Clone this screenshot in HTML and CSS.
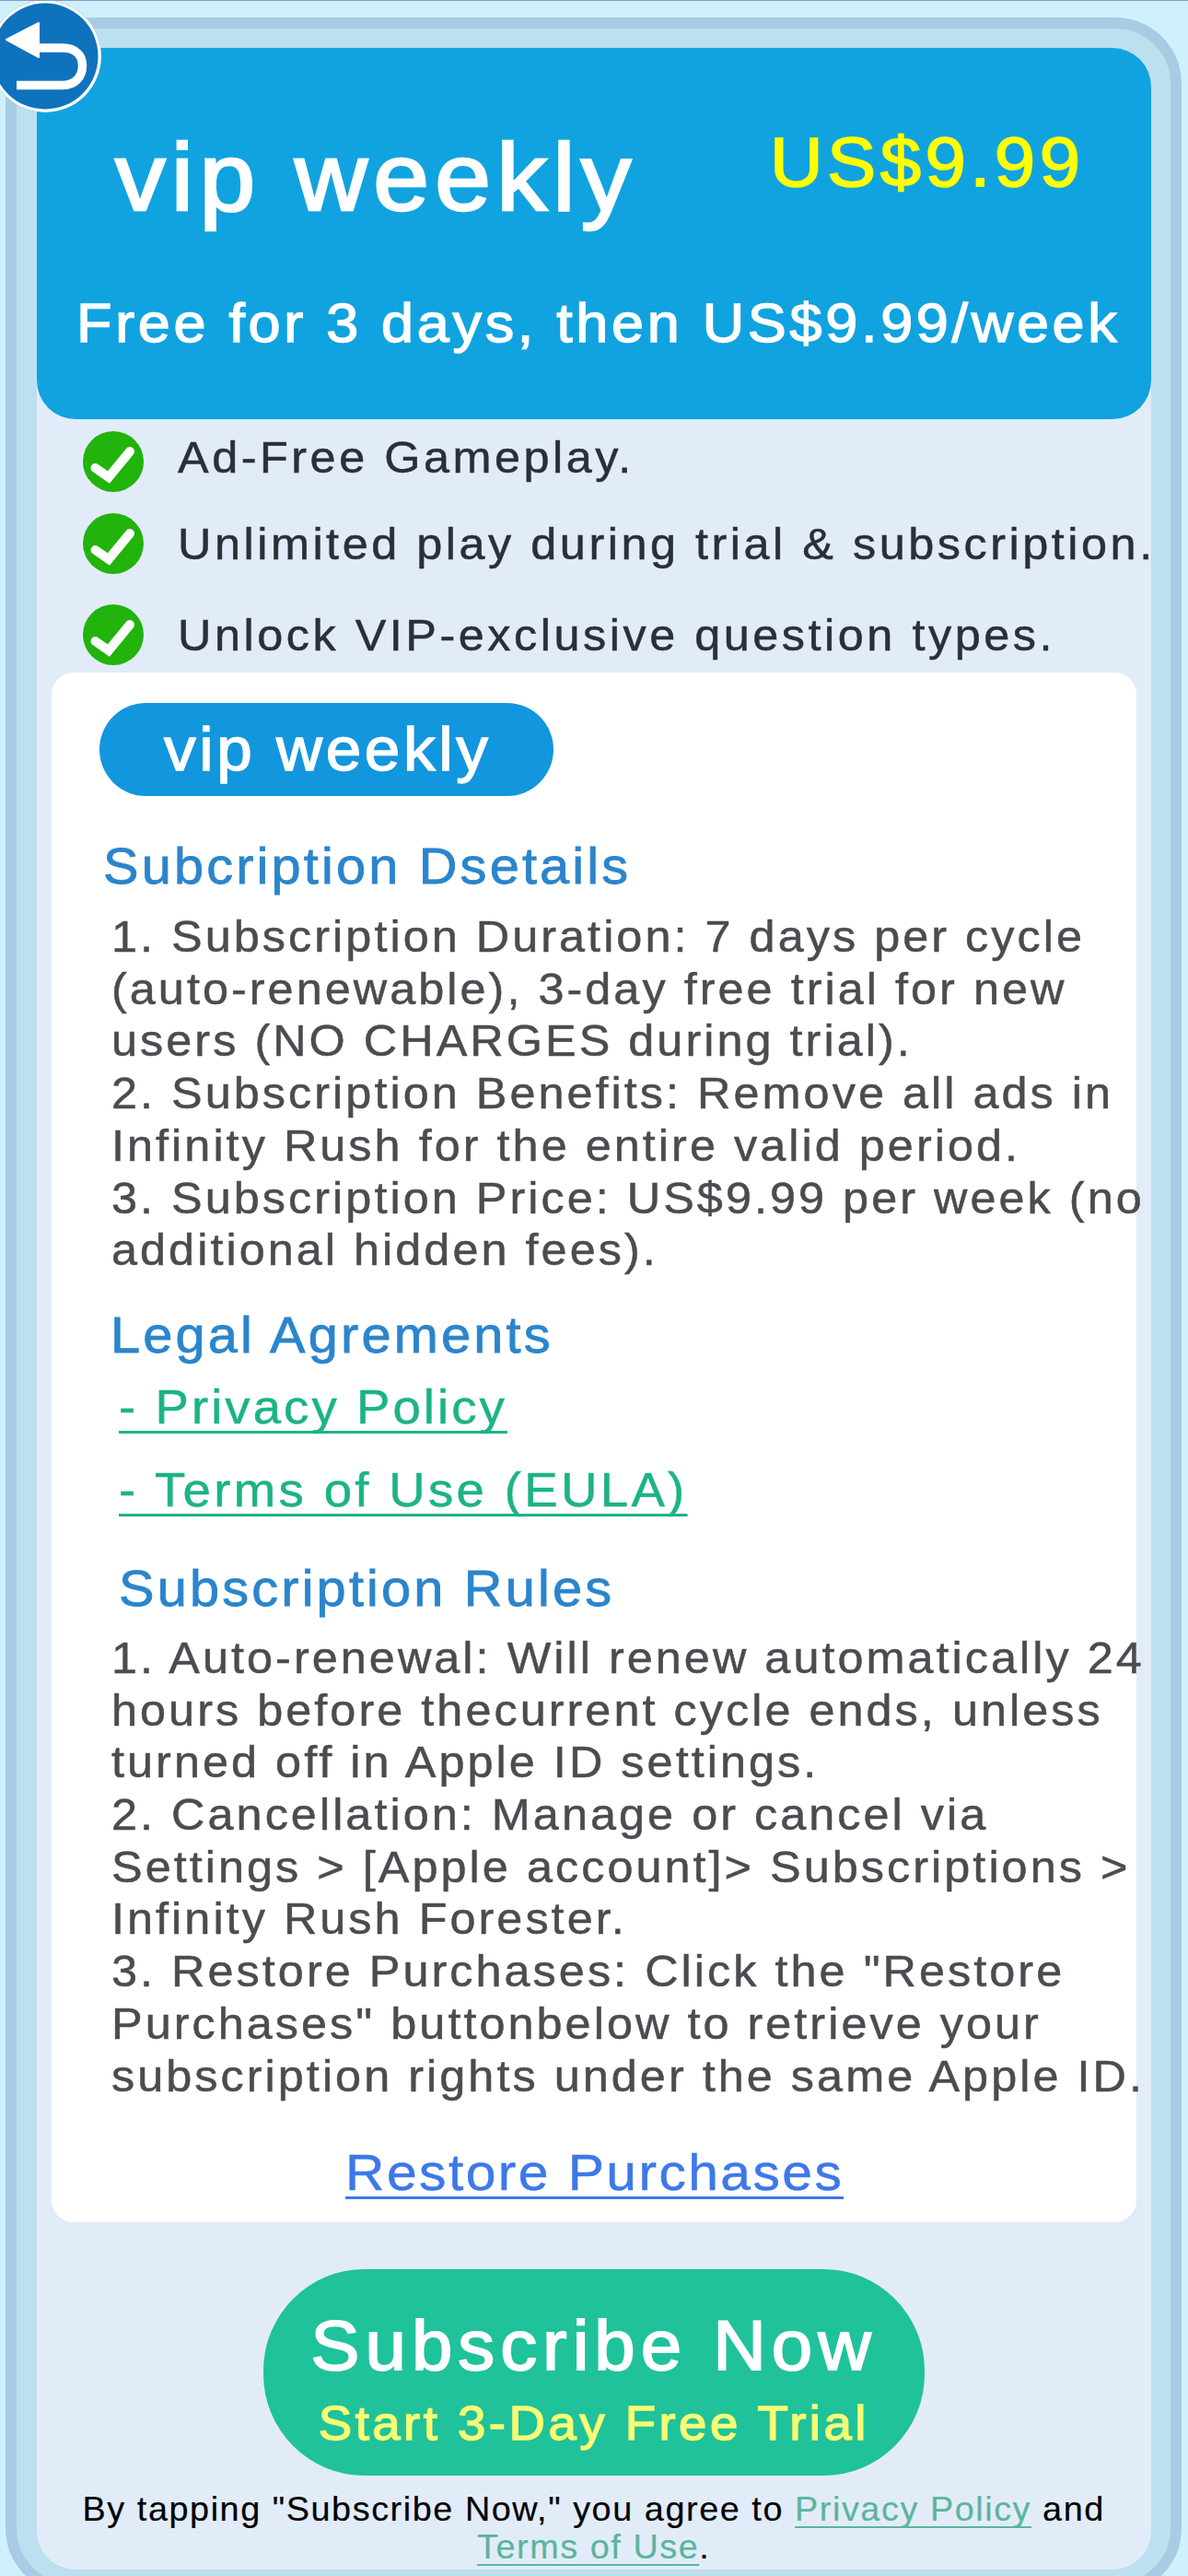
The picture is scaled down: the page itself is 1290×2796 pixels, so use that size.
FILE: index.html
```html
<!DOCTYPE html>
<html lang="en">
<head>
<meta charset="utf-8">
<title>vip weekly</title>
<link rel="stylesheet" href="styles.css">
</head>
<body>
<button class="back" aria-label="Back">
  <svg viewBox="-12 0 122 122" width="122" height="122"><path class="back-arrow" d="M7 43 L42 25 L42 62 Z"/><path class="back-line" d="M40 52 H68 C83 52 89.500 61 89.500 71 C89.500 84 81 92.500 68 92.500 H18"/></svg>
</button>
<main class="frame">
  <div class="inner">
    <header class="hero">
      <div class="hero-top">
        <h1 class="hero-title wide">vip weekly</h1>
        <div class="hero-price wide">US$9.99</div>
      </div>
      <p class="hero-sub wide">Free for 3 days, then US$9.99/week</p>
    </header>
    <ul class="features">
      <li class="feature f1"><svg class="check" viewBox="0 0 66 66"><circle cx="33" cy="33" r="33"/><path d="M13.500 40 L28 50 L51 22"/></svg><span class="wide">Ad-Free Gameplay.</span></li>
      <li class="feature f2"><svg class="check" viewBox="0 0 66 66"><circle cx="33" cy="33" r="33"/><path d="M13.500 40 L28 50 L51 22"/></svg><span class="wide">Unlimited play during trial &amp; subscription.</span></li>
      <li class="feature f3"><svg class="check" viewBox="0 0 66 66"><circle cx="33" cy="33" r="33"/><path d="M13.500 40 L28 50 L51 22"/></svg><span class="wide">Unlock VIP-exclusive question types.</span></li>
    </ul>
    <section class="card">
      <div class="pill"><span class="pill-label wide">vip weekly</span></div>
      <h2 class="heading h-details wide">Subcription Dsetails</h2>
      <p class="body-text first-body wide">1. Subscription Duration: 7 days per cycle<br>(auto-renewable), 3-day free trial for new<br>users (NO CHARGES during trial).<br>2. Subscription Benefits: Remove all ads in<br>Infinity Rush for the entire valid period.<br>3. Subscription Price: US$9.99 per week (no<br>additional hidden fees).</p>
      <h2 class="heading h-legal wide">Legal Agrements</h2>
      <a class="legal-link first wide" href="#">- Privacy Policy</a>
      <a class="legal-link terms wide" href="#">- Terms of Use (EULA)</a>
      <h2 class="heading h-rules wide">Subscription Rules</h2>
      <p class="body-text wide">1. Auto-renewal: Will renew automatically 24<br>hours before thecurrent cycle ends, unless<br>turned off in Apple ID settings.<br>2. Cancellation: Manage or cancel via<br>Settings &gt; [Apple account]&gt; Subscriptions &gt;<br>Infinity Rush Forester.<br>3. Restore Purchases: Click the "Restore<br>Purchases" buttonbelow to retrieve your<br>subscription rights under the same Apple ID.</p>
      <a class="restore wide-center" href="#">Restore Purchases</a>
    </section>
    <button class="subscribe">
      <span class="sub-main wide-center">Subscribe Now</span>
      <span class="sub-note wide-center">Start 3-Day Free Trial</span>
    </button>
    <p class="legal-note wide-center">By tapping "Subscribe Now," you agree to <a href="#">Privacy Policy</a> and<br><a href="#">Terms of Use</a>.</p>
  </div>
</main>
</body>
</html>
```
FILE: styles.css
```css
* { box-sizing: border-box; }
html, body { margin: 0; padding: 0; }
body {
  width: 1290px;
  height: 2796px;
  overflow: hidden;
  position: relative;
  background: #d0f1fc;
  border-top: 1px solid #7f9fc4;
  padding: 18px 7px 0 6px;
  font-family: "Liberation Sans", Arial, sans-serif;
}
h1, h2, p, ul { margin: 0; padding: 0; }
.wide { transform: scaleX(1.05); transform-origin: left center; }
.wide-center { transform: scaleX(1.05); transform-origin: center center; }
.frame {
  height: 2797px;
  border: 12px solid #aacbe4;
  border-radius: 72px;
  background: #bde0f0;
  padding: 21px 21px 0 22px;
}
.inner {
  height: 2737px;
  background: #e2ecf9;
  border-radius: 42px;
  display: flex;
  flex-direction: column;
}
.back {
  position: absolute;
  left: -12px;
  top: -1px;
  width: 122px;
  height: 122px;
  border-radius: 50%;
  border: 0;
  box-shadow: inset 0 0 0 3.5px #f4f9fc;
  background: #0f72bc;
  padding: 0;
  z-index: 2;
}
.back svg { display: block; }
.back-arrow { fill: #fff; stroke: #fff; stroke-width: 2; stroke-linejoin: round; }
.back-line { fill: none; stroke: #fff; stroke-width: 9.5; }
.hero {
  height: 403px;
  background: #10a3e0;
  border-radius: 42px;
  color: #fff;
  padding: 0 0 0 44px;
}
.hero-top { display: flex; height: 244px; }
.hero-title {
  font-size: 104px;
  font-weight: 400;
  letter-spacing: 6px;
  line-height: 1;
  padding: 88px 0 0 39px;
  -webkit-text-stroke: 2.6px #fff;
  width: 752px;
  white-space: nowrap;
}
.hero-price {
  font-size: 76px;
  letter-spacing: 4.2px;
  color: #ffff00;
  line-height: 1;
  padding-top: 86px;
  -webkit-text-stroke: 1.6px #ffff00;
  white-space: nowrap;
}
.hero-sub {
  font-size: 60px;
  letter-spacing: 3.5px;
  line-height: 66px;
  margin: 22px 0 0 -1px;
  -webkit-text-stroke: 1.4px #fff;
  white-space: nowrap;
}
.features { list-style: none; height: 275px; padding: 0 0 0 50px; display: flex; flex-direction: column; }
.feature {
  display: flex;
  align-items: center;
  font-size: 48px;
  letter-spacing: 3.35px;
  color: #2a2f38;
  white-space: nowrap;
  height: 66px;
  -webkit-text-stroke: 0.5px #2a2f38;
}
.f1 { margin-top: 13px; }
.f2 { margin-top: 23px; }
.f3 { margin-top: 33px; }
.feature span { margin-left: 37px; }
.f1 span { padding-bottom: 9px; }
.check { width: 66px; height: 66px; flex: none; }
.check circle { fill: #22b30c; stroke: none; }
.check path { fill: none; stroke: #fff; stroke-width: 10; stroke-linecap: round; stroke-linejoin: miter; }
.card {
  width: 1178px;
  height: 1682px;
  margin-left: 16px;
  background: #fff;
  border-radius: 24px;
  padding: 33px 0 0 52px;
  display: flex;
  flex-direction: column;
  align-items: flex-start;
}
.pill {
  width: 493px;
  height: 101px;
  border-radius: 51px;
  background: #1296dd;
  color: #fff;
  font-size: 66px;
  letter-spacing: 3.4px;
  line-height: 101px;
  padding-left: 70px;
  -webkit-text-stroke: 1.4px #fff;
}
.pill-label { display: block; white-space: nowrap; }
.heading {
  font-size: 55px;
  font-weight: 400;
  letter-spacing: 3px;
  line-height: 60px;
  color: #2b85cc;
  -webkit-text-stroke: 0.8px #2b85cc;
  white-space: nowrap;
}
.h-details { margin: 46px 0 0 4px; }
.h-legal { margin: 33px 0 0 12px; }
.h-rules { margin: 46px 0 0 21px; }
.body-text {
  font-size: 48px;
  letter-spacing: 2.88px;
  line-height: 56.7px;
  color: #4a4c50;
  -webkit-text-stroke: 0.5px #4a4c50;
  white-space: nowrap;
  margin: 18px 0 0 13px;
}
.first-body { margin-top: 19px; }
.legal-link {
  display: block;
  margin: 28px 0 0 21px;
  font-size: 52px;
  letter-spacing: 3px;
  line-height: 62px;
  color: #1cb386;
  -webkit-text-stroke: 0.5px #1cb386;
  white-space: nowrap;
  text-decoration-thickness: 3px;
  text-underline-offset: 8px;
  text-decoration-skip-ink: none;
}
.legal-link.first { margin-top: 17px; letter-spacing: 2.9px; }
.legal-link.terms { letter-spacing: 3.15px; }
.restore {
  align-self: center;
  margin: 43.5px 0 0 -50px;
  font-size: 56px;
  letter-spacing: 2.3px;
  line-height: 64px;
  color: #3d78ea;
  -webkit-text-stroke: 0.5px #3d78ea;
  white-space: nowrap;
  text-decoration-thickness: 3px;
  text-underline-offset: 7px;
  text-decoration-skip-ink: none;
}
.subscribe {
  align-self: center;
  width: 718px;
  height: 224px;
  margin-top: 51px;
  border: 0;
  border-radius: 110px;
  background: #1fc29a;
  font-family: inherit;
  display: flex;
  flex-direction: column;
  align-items: center;
  padding: 38.7px 0 0;
}
.sub-main { font-size: 76px; letter-spacing: 5.7px; line-height: 88px; color: #fff; -webkit-text-stroke: 1.8px #fff; white-space: nowrap; }
.sub-note { font-size: 52px; letter-spacing: 3.3px; line-height: 60px; margin-top: 10px; color: #f8fb74; -webkit-text-stroke: 1.4px #f8fb74; white-space: nowrap; }
.legal-note {
  align-self: center;
  font-size: 36px;
  letter-spacing: 1.48px;
  line-height: 41px;
  color: #000;
  text-align: center;
  white-space: nowrap;
  margin-top: 15.5px;
  -webkit-text-stroke: 0.2px #000;
}
.legal-note a { color: #5ab59c; -webkit-text-stroke: 0.2px #5ab59c; text-decoration-thickness: 2px; text-underline-offset: 6px; text-decoration-skip-ink: none; }
```
